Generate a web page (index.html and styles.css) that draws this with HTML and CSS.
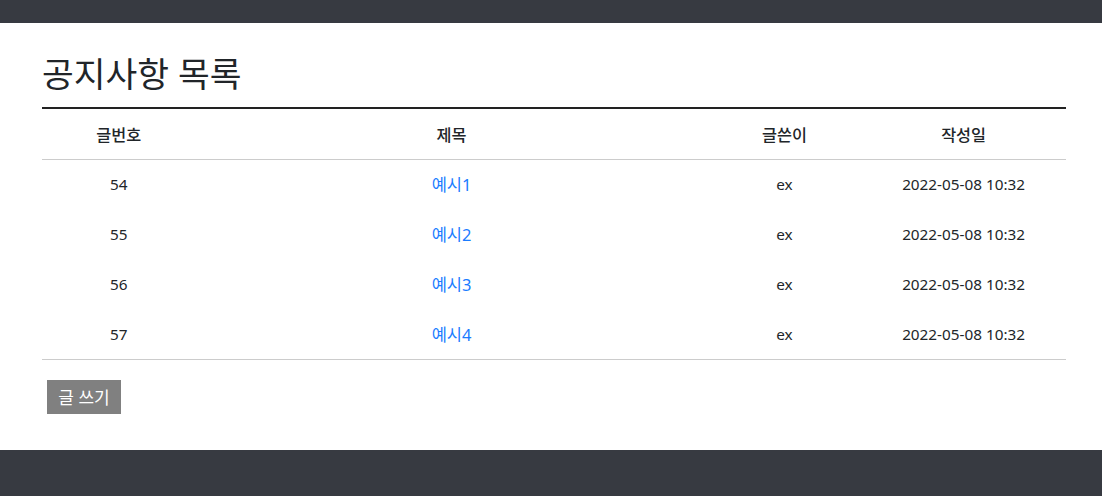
FILE: index.html
```html
<!DOCTYPE html>
<html lang="ko">
<head>
<meta charset="utf-8">
<title>공지사항 목록</title>
<link rel="stylesheet" href="styles.css">
</head>
<body>
<header class="topbar"></header>
<main class="container">
  <h1 class="title">공지사항 목록</h1>
  <table class="board">
    <colgroup>
      <col class="c-no"><col class="c-title"><col class="c-writer"><col class="c-date">
    </colgroup>
    <thead>
      <tr><th>글번호</th><th>제목</th><th>글쓴이</th><th>작성일</th></tr>
    </thead>
    <tbody>
      <tr><td>54</td><td><a href="#">예시1</a></td><td>ex</td><td>2022-05-08 10:32</td></tr>
      <tr><td>55</td><td><a href="#">예시2</a></td><td>ex</td><td>2022-05-08 10:32</td></tr>
      <tr><td>56</td><td><a href="#">예시3</a></td><td>ex</td><td>2022-05-08 10:32</td></tr>
      <tr><td>57</td><td><a href="#">예시4</a></td><td>ex</td><td>2022-05-08 10:32</td></tr>
    </tbody>
  </table>
  <div class="actions">
    <button class="btn-write" type="button">글 쓰기</button>
  </div>
</main>
<footer class="footer"></footer>
</body>
</html>
```
FILE: styles.css
```css
* { box-sizing: border-box; }
html, body { margin: 0; padding: 0; background: #fff; }
body {
  font-family: "Noto Sans", "Noto Sans CJK KR", sans-serif;
  font-size: 15.3px;
  color: #212529;
}
.topbar { height: 23px; background: #373a41; }
.container { padding: 0 36px 0 42px; width: 1102px; }
.title {
  margin: 0;
  padding-top: 28px;
  height: 84px;
  font-size: 34.5px;
  font-weight: 400;
  line-height: 46px;
}
.board {
  width: 1024px;
  border-collapse: collapse;
  border-top: 2px solid #222;
}
.c-no { width: 15%; }
.c-title { width: 50%; }
.c-writer { width: 15%; }
.c-date { width: 20%; }
.board th, .board td {
  text-align: center;
  height: 50px;
  padding: 0;
  vertical-align: middle;
}
.board th { font-size: 16.3px; font-weight: 500; border-bottom: 1px solid #ccc; height: 51px; }
.board tbody tr:last-child td { border-bottom: 1px solid #ccc; }
.board a { color: #1a7cff; text-decoration: none; font-size: 16.5px; }
.actions { padding: 20px 0 36px 5px; }
.btn-write {
  font-family: inherit;
  font-size: 17px;
  color: #fff;
  background: #808080;
  border: 0;
  border-radius: 0;
  height: 34px;
  width: 74px;
  padding: 0;
}
.footer { height: 46px; background: #373a41; }
```
